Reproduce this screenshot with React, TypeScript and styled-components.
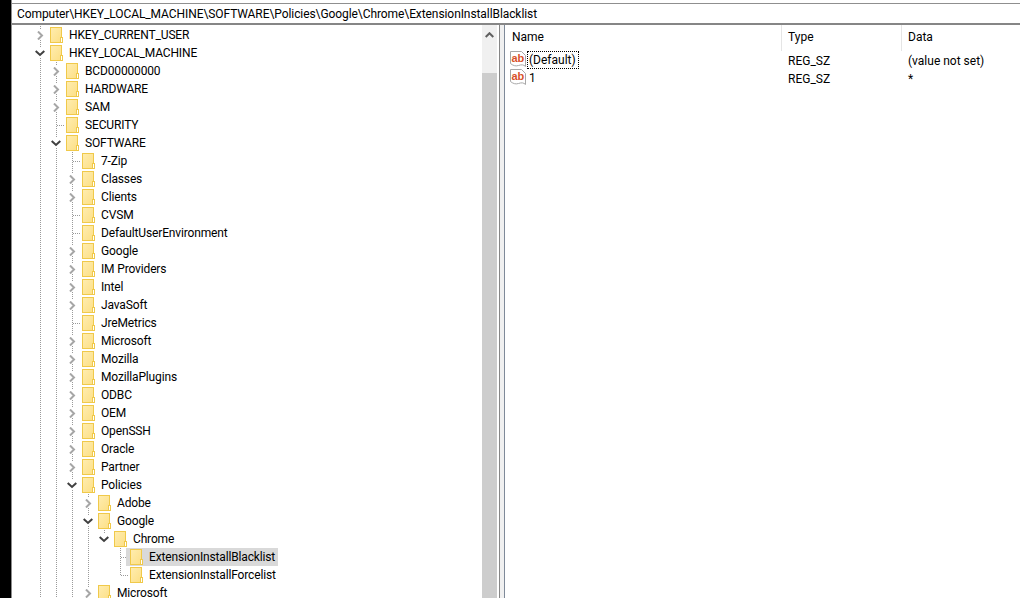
import React from "react";
import styled, { createGlobalStyle } from "styled-components";

const GlobalStyle = createGlobalStyle`
  html, body {
    margin: 0;
    padding: 0;
    background: #ffffff;
    overflow: hidden;
  }
  body {
    font-family: Roboto, "Noto Sans", sans-serif;
    font-size: 12px;
    color: #000000;
  }
`;

const Screen = styled.div`
  width: 1020px;
  height: 598px;
  display: flex;
  overflow: hidden;
  background: #000000;
`;

const Window = styled.div`
  margin-left: 11px;
  flex: 1;
  min-width: 0;
  display: flex;
  flex-direction: column;
  background: #ffffff;
  border-left: 1px solid #8c8c8c;
`;

const AddressBar = styled.div`
  height: 19px;
  margin-top: 3px;
  flex: none;
  display: flex;
  align-items: center;
  padding-left: 5px;
  border-top: 1px solid #8f8f8f;
  border-bottom: 2px solid #868686;
  white-space: nowrap;
  letter-spacing: -0.08px;
`;

const Panes = styled.div`
  flex: 1;
  min-height: 0;
  display: flex;
`;

const TreePane = styled.div`
  width: 450px;
  flex: none;
  padding: 1px 0 0 20px;
  overflow: hidden;
`;

const Scrollbar = styled.div`
  width: 15px;
  flex: none;
  display: flex;
  flex-direction: column;
  background: #f0f0f0;
`;

const ScrollButton = styled.div`
  height: 48px;
  flex: none;
  display: flex;
  justify-content: center;
  padding-top: 7px;
  box-sizing: border-box;
`;

const ScrollThumb = styled.div`
  flex: 1;
  background: #cdcdcd;
`;

const Splitter = styled.div`
  width: 4px;
  flex: none;
  margin-left: 2px;
  background: #f0f0f0;
  border-left: 1px solid #868686;
  border-right: 1px solid #7f8a99;
`;

const ListPane = styled.div`
  flex: 1;
  min-width: 0;
  display: flex;
  flex-direction: column;
`;

const ListHeader = styled.div`
  height: 26px;
  flex: none;
  display: grid;
  grid-template-columns: 277px 120px 1fr;
`;

const HeaderCell = styled.div<{ $divider?: boolean }>`
  display: flex;
  align-items: center;
  padding: 0 0 2px ${(p) => (p.$divider ? 6 : 7)}px;
  border-right: 1px solid #e5e5e5;
  &:last-child {
    border-right: none;
  }
`;

const ListRow = styled.div`
  height: 18px;
  display: grid;
  grid-template-columns: 277px 120px 1fr;
  align-items: center;
  white-space: nowrap;
`;

const NameCell = styled.div`
  display: flex;
  align-items: center;
  padding-left: 5px;
`;

const ValueName = styled.span<{ $focused?: boolean }>`
  height: 18px;
  line-height: 17px;
  margin-left: 1px;
  padding: 0 2px 0 1px;
  box-sizing: border-box;
  border: 1px ${(p) => (p.$focused ? "dotted #000000" : "solid transparent")};
`;

const ValueCell = styled.div`
  padding: 1px 0 0 6px;
`;

const IconSvg = styled.svg`
  flex: none;
  margin-bottom: 2px;
`;

const TreeRow = styled.div`
  height: 18px;
  display: flex;
  white-space: nowrap;
`;

const dots = "repeating-linear-gradient(to bottom, #9a9a9a 0 1px, transparent 1px 2px)";
const dotsAcross = "repeating-linear-gradient(to right, #9a9a9a 0 1px, transparent 1px 2px)";

const Guide = styled.div<{ $through?: boolean }>`
  width: 16px;
  flex: none;
  background-image: ${(p) => (p.$through ? dots : "none")};
  background-size: 1px 100%;
  background-position: 8px 0;
  background-repeat: no-repeat;
`;

// the cell holding the expander and the elbow that leads into the folder
const Connector = styled.div<{ $last?: boolean; $tick?: boolean }>`
  width: 16px;
  height: 18px;
  flex: none;
  display: flex;
  align-items: center;
  justify-content: center;
  background-image: ${dots}, ${(p) => (p.$tick ? dotsAcross : "none")};
  background-size: 1px ${(p) => (p.$last ? 9 : 18)}px, 7px 1px;
  background-position: 8px 0, 9px 9px;
  background-repeat: no-repeat;
`;

const ChevronBack = styled.span`
  width: 12px;
  height: 10px;
  display: flex;
  align-items: center;
  justify-content: center;
  background: #ffffff;
`;

const TreeItem = styled.div<{ $selected?: boolean }>`
  display: flex;
  align-items: center;
  height: 18px;
  margin-left: -2px;
  padding: 0 3px 0 4px;
  gap: 6px;
  background: ${(p) => (p.$selected ? "#d9d9d9" : "transparent")};
`;

const TreeLabel = styled.span`
  line-height: 16px;
  margin-bottom: 1px;
  letter-spacing: -0.15px;
`;

const Folder = () => (
  <svg width="13" height="16" viewBox="0 0 13 16">
    <defs>
      <linearGradient id="folderFill" x1="0" y1="0" x2="1" y2="1">
        <stop offset="0" stopColor="#ffedb0" />
        <stop offset="1" stopColor="#fcdf85" />
      </linearGradient>
    </defs>
    <rect x="0.5" y="0.5" width="11" height="15" fill="url(#folderFill)" stroke="#f0c94a" />
    <rect x="10.5" y="10.5" width="2" height="5" fill="#ffffff" stroke="#f0c94a" />
  </svg>
);

const ChevronRight = () => (
  <svg width="7" height="9" viewBox="0 0 7 9">
    <path d="M1 0.5 L5 4.5 L1 8.5" fill="none" stroke="#a6a6a6" strokeWidth="2" />
  </svg>
);

const ChevronDown = () => (
  <svg width="10" height="7" viewBox="0 0 10 7">
    <path d="M0.7 1 L5 5 L9.3 1" fill="none" stroke="#404040" strokeWidth="2" />
  </svg>
);

const ChevronUp = () => (
  <svg width="9" height="6" viewBox="0 0 9 6">
    <path d="M0.7 5 L4.5 1.2 L8.3 5" fill="none" stroke="#606060" strokeWidth="2" />
  </svg>
);

const StringIcon = () => (
  <IconSvg width="16" height="16" viewBox="0 0 16 16">
    <path
      d="M0.5 0.5 H11.5 L15.5 4.5 V15.5 C13.5 13.5 11.5 13.5 8.5 14.5 C5.5 15.5 3 14.5 0.5 12.5 Z"
      fill="#ffffff"
      stroke="#a8a8a8"
    />
    <text
      x="1.5"
      y="11"
      fontFamily="Liberation Sans, sans-serif"
      fontWeight="700"
      fontSize="11"
      fill="#d8512a"
    >
      ab
    </text>
  </IconSvg>
);

type Node = {
  label: string;
  level: number;
  expander?: "open" | "closed";
  guides: number[];
  last?: boolean;
  selected?: boolean;
};

const software = (label: string, expander?: "open" | "closed"): Node => ({
  label,
  level: 2,
  expander,
  guides: [0, 1],
});

const policy = (label: string, expander?: "open" | "closed"): Node => ({
  label,
  level: 3,
  expander,
  guides: [0, 1, 2],
});

const hive = (label: string, expander?: "open" | "closed"): Node => ({
  label,
  level: 1,
  expander,
  guides: [0],
});

const nodes: Node[] = [
  { label: "HKEY_CURRENT_USER", level: 0, expander: "closed", guides: [] },
  { label: "HKEY_LOCAL_MACHINE", level: 0, expander: "open", guides: [] },
  hive("BCD00000000", "closed"),
  hive("HARDWARE", "closed"),
  hive("SAM", "closed"),
  hive("SECURITY"),
  hive("SOFTWARE", "open"),
  software("7-Zip"),
  software("Classes", "closed"),
  software("Clients", "closed"),
  software("CVSM"),
  software("DefaultUserEnvironment"),
  software("Google", "closed"),
  software("IM Providers", "closed"),
  software("Intel", "closed"),
  software("JavaSoft", "closed"),
  software("JreMetrics"),
  software("Microsoft", "closed"),
  software("Mozilla", "closed"),
  software("MozillaPlugins", "closed"),
  software("ODBC", "closed"),
  software("OEM", "closed"),
  software("OpenSSH", "closed"),
  software("Oracle", "closed"),
  software("Partner", "closed"),
  software("Policies", "open"),
  policy("Adobe", "closed"),
  policy("Google", "open"),
  { label: "Chrome", level: 4, expander: "open", guides: [0, 1, 2, 3], last: true },
  { label: "ExtensionInstallBlacklist", level: 5, guides: [0, 1, 2, 3], selected: true },
  { label: "ExtensionInstallForcelist", level: 5, guides: [0, 1, 2, 3], last: true },
  policy("Microsoft", "closed"),
];

const values = [
  { name: "(Default)", type: "REG_SZ", data: "(value not set)", focused: true },
  { name: "1", type: "REG_SZ", data: "*" },
];

export default function App() {
  return (
    <Screen>
      <GlobalStyle />
      <Window>
        <AddressBar>Computer\HKEY_LOCAL_MACHINE\SOFTWARE\Policies\Google\Chrome\ExtensionInstallBlacklist</AddressBar>
        <Panes>
          <TreePane>
            {nodes.map((node, i) => (
              <TreeRow key={i}>
                {Array.from({ length: node.level }, (_, l) => (
                  <Guide key={l} $through={node.guides.includes(l)} />
                ))}
                <Connector $last={node.last} $tick={!node.expander}>
                  {node.expander && (
                    <ChevronBack>{node.expander === "open" ? <ChevronDown /> : <ChevronRight />}</ChevronBack>
                  )}
                </Connector>
                <TreeItem $selected={node.selected}>
                  <Folder />
                  <TreeLabel>{node.label}</TreeLabel>
                </TreeItem>
              </TreeRow>
            ))}
          </TreePane>
          <Scrollbar>
            <ScrollButton>
              <ChevronUp />
            </ScrollButton>
            <ScrollThumb />
          </Scrollbar>
          <Splitter />
          <ListPane>
            <ListHeader>
              <HeaderCell>Name</HeaderCell>
              <HeaderCell $divider>Type</HeaderCell>
              <HeaderCell $divider>Data</HeaderCell>
            </ListHeader>
            {values.map((v) => (
              <ListRow key={v.name}>
                <NameCell>
                  <StringIcon />
                  <ValueName $focused={v.focused}>{v.name}</ValueName>
                </NameCell>
                <ValueCell>{v.type}</ValueCell>
                <ValueCell>{v.data}</ValueCell>
              </ListRow>
            ))}
          </ListPane>
        </Panes>
      </Window>
    </Screen>
  );
}
